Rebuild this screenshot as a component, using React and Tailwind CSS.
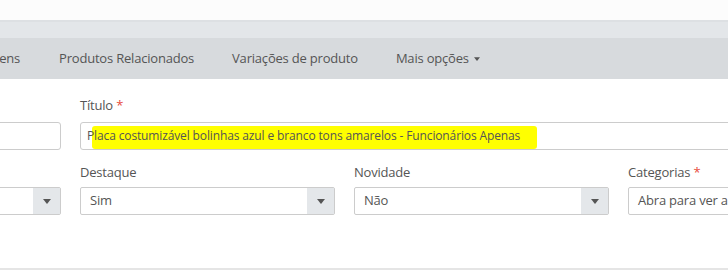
export default function App() {
  const Caret = ({ w = 8, h = 5 }) => (
    <svg width={w} height={h} viewBox="0 0 8 5"><path d="M0 0h8L4 5z" fill="#555" /></svg>
  );
  const Select = ({ value }) => (
    <div className="h-[28px] w-full flex border border-[#ccc] rounded-[2px] bg-white">
      <div className="flex-1 px-[9px] flex items-center text-[13px] tracking-[-0.2px] text-[#555] whitespace-nowrap overflow-hidden">{value}</div>
      <div className="w-[27px] bg-[#e4e7ea] flex items-center justify-center"><Caret /></div>
    </div>
  );
  return (
    <div className="w-[728px] h-[277px] overflow-hidden bg-white font-['Open_Sans',sans-serif] text-[#555]">
      <div className="h-[20px] bg-[#fcfcfc]" />
      <div className="h-[18px] bg-[#e3e6e9] border-t-2 border-[#dde0e3]" />
      <div className="h-[41px] bg-[#d7dadd] flex items-center text-[13px] tracking-[-0.2px] text-[#555] whitespace-nowrap pt-[1px]">
        <span className="ml-[-30px]">Imagens</span>
        <span className="ml-[39px]">Produtos Relacionados</span>
        <span className="ml-[38px]">Variações de produto</span>
        <span className="ml-[38px] flex items-center gap-[5px]">Mais opções <Caret w={6} h={4} /></span>
      </div>
      <div className="ml-[-194px] pt-[17px] flex flex-col">
        <div className="flex gap-[19px]">
          <div className="w-[255px] shrink-0 flex flex-col">
            <div className="h-[18px] mb-[8px]" />
            <div className="h-[28px] border border-[#ccc] rounded-[3px]" />
          </div>
          <div className="w-[803px] shrink-0 flex flex-col">
            <div className="h-[18px] mb-[8px] text-[13px] tracking-[-0.2px] leading-[18px]">Título <span className="text-[#e74c3c]">*</span></div>
            <div className="h-[28px] border border-[#ccc] rounded-[3px] flex items-center px-[6px] text-[12px] tracking-[-0.13px] text-[#555] whitespace-nowrap relative">
              <span className="absolute left-[11px] top-[3px] w-[445px] h-[23px] bg-[#ffff00] rounded-[3px]" />
              <span className="relative">Placa costumizável bolinhas azul e branco tons amarelos - Funcionários Apenas</span>
            </div>
          </div>
        </div>
        <div className="flex gap-[19px] mt-[13px]">
          <div className="w-[255px] shrink-0 flex flex-col">
            <div className="h-[18px] mb-[6px]" />
            <Select value="" />
          </div>
          <div className="w-[255px] shrink-0 flex flex-col">
            <div className="h-[18px] mb-[6px] text-[13px] tracking-[-0.2px] leading-[18px]">Destaque</div>
            <Select value="Sim" />
          </div>
          <div className="w-[255px] shrink-0 flex flex-col">
            <div className="h-[18px] mb-[6px] text-[13px] tracking-[-0.2px] leading-[18px]">Novidade</div>
            <Select value="Não" />
          </div>
          <div className="w-[255px] shrink-0 flex flex-col">
            <div className="h-[18px] mb-[6px] text-[13px] tracking-[-0.2px] leading-[18px]">Categorias <span className="text-[#e74c3c]">*</span></div>
            <div className="h-[28px] w-full border border-[#ccc] rounded-[2px] px-[9px] flex items-center text-[13px] tracking-[-0.2px] whitespace-nowrap overflow-hidden">Abra para ver as categorias</div>
          </div>
        </div>
      </div>
      <div className="mt-[53px] border-t-2 border-[#e5e5e5]" />
      <div className="flex text-[13px] whitespace-nowrap mt-[5px]">
        <span className="ml-[188px]">Informações</span>
        <span className="ml-[40px]">Descrição</span>
      </div>
    </div>
  );
}
